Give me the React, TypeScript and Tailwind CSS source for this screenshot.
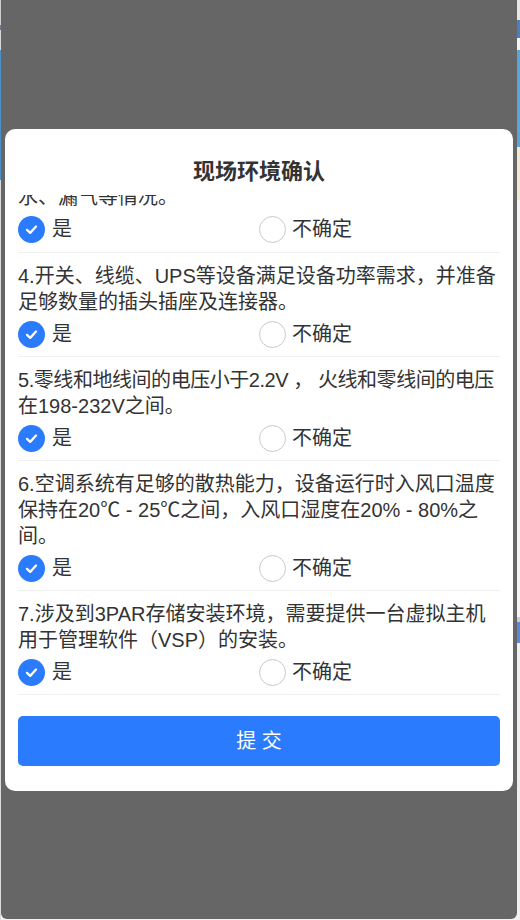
import React from "react";

const questions: string[][] = [
  ["4.开关、线缆、UPS等设备满足设备功率需求，并准备", "足够数量的插头插座及连接器。"],
  ["5.零线和地线间的电压小于2.2V ， 火线和零线间的电压", "在198-232V之间。"],
  ["6.空调系统有足够的散热能力，设备运行时入风口温度", "保持在20℃ - 25℃之间，入风口湿度在20% - 80%之", "间。"],
  ["7.涉及到3PAR存储安装环境，需要提供一台虚拟主机", "用于管理软件（VSP）的安装。"],
];

function Checked() {
  return (
    <span className="flex h-[27px] w-[27px] shrink-0 items-center justify-center rounded-full bg-[#2a7bfe]">
      <svg width="15" height="15" viewBox="0 0 16 16" fill="none">
        <path d="M3.2 8.4 L6.6 11.6 L12.8 4.8" stroke="white" strokeWidth="2.4" strokeLinecap="round" strokeLinejoin="round" />
      </svg>
    </span>
  );
}

function Unchecked() {
  return <span className="h-[27px] w-[27px] shrink-0 rounded-full border border-[#c8c9cc] bg-white" />;
}

function RadioRow() {
  return (
    <div className="grid h-[38px] grid-cols-2 items-center">
      <div className="flex items-center gap-[7px]">
        <Checked />
        <span className="text-[20px] leading-[26px] text-[#333]">是</span>
      </div>
      <div className="flex items-center gap-[6px]">
        <Unchecked />
        <span className="text-[20px] leading-[26px] text-[#333]">不确定</span>
      </div>
    </div>
  );
}

export default function App() {
  return (
    <div
      className="flex h-[920px] w-[520px] overflow-hidden bg-[#f2f2f2]"
      style={{ fontFamily: '"Liberation Sans", "Noto Sans CJK SC", sans-serif' }}
    >
      <div className="flex w-[1px] shrink-0 flex-col">
        <div className="h-[25px] bg-[#cfcfcf]" />
        <div className="h-[5px] bg-[#6a7a90]" />
        <div className="h-[20px] bg-[#d8d8d8]" />
        <div className="h-[130px] bg-[#4b8fc6]" />
        <div className="flex-1 bg-[#dcdcdc]" />
      </div>
      <div className="relative flex h-[919px] w-[516px] shrink-0 flex-col rounded-b-[6px] bg-[#666666]">
        <div className="mx-[4px] mt-[129px] flex flex-col rounded-[10px] bg-white px-[13px]">
          <div className="pb-[8px] pt-[28px] text-center text-[22px] font-bold leading-[30px] text-[#333]">
            现场环境确认
          </div>
          <div className="h-[502px] overflow-hidden">
            <div className="-mt-[11px] text-[20px] leading-[26px] text-[#333]">水、漏气等情况。</div>
            <div className="border-b border-[#f0f0f0] pb-[4px]">
              <RadioRow />
            </div>
            {questions.map((lines) => (
              <div key={lines[0]} className="border-b border-[#f0f0f0] pb-[3px] pt-[10px]">
                <div className="text-[20px] leading-[26px] text-[#333]">
                  {lines.map((l, i) => (
                    <div
                      key={l}
                      className={
                        i === 0 && l.startsWith("5.")
                          ? "whitespace-nowrap tracking-[-0.45px]"
                          : "whitespace-nowrap"
                      }
                    >
                      {l}
                    </div>
                  ))}
                </div>
                <RadioRow />
              </div>
            ))}
          </div>
          <div className="pb-[25px] pt-[19px]">
            <button className="flex h-[50px] w-full items-center justify-center rounded-[5px] bg-[#2a7bfe] text-[20px] text-white">
              提 交
            </button>
          </div>
        </div>
      </div>
      <div className="flex w-[3px] shrink-0 flex-col">
        <div className="h-[20px] bg-[#e6e6e6]" />
        <div className="h-[18px] bg-[#4a7fc0]" />
        <div className="h-[12px] bg-[#f4f4f4]" />
        <div className="h-[97px] bg-[#5aa6d9]" />
        <div className="h-[53px] bg-[#eee8d5]" />
        <div className="h-[417px] bg-[#f5f5f5]" />
        <div className="h-[5px] bg-[#cccccc]" />
        <div className="h-[21px] bg-[#5b8bd6]" />
        <div className="flex-1 bg-[#f0f0f0]" />
      </div>
    </div>
  );
}
